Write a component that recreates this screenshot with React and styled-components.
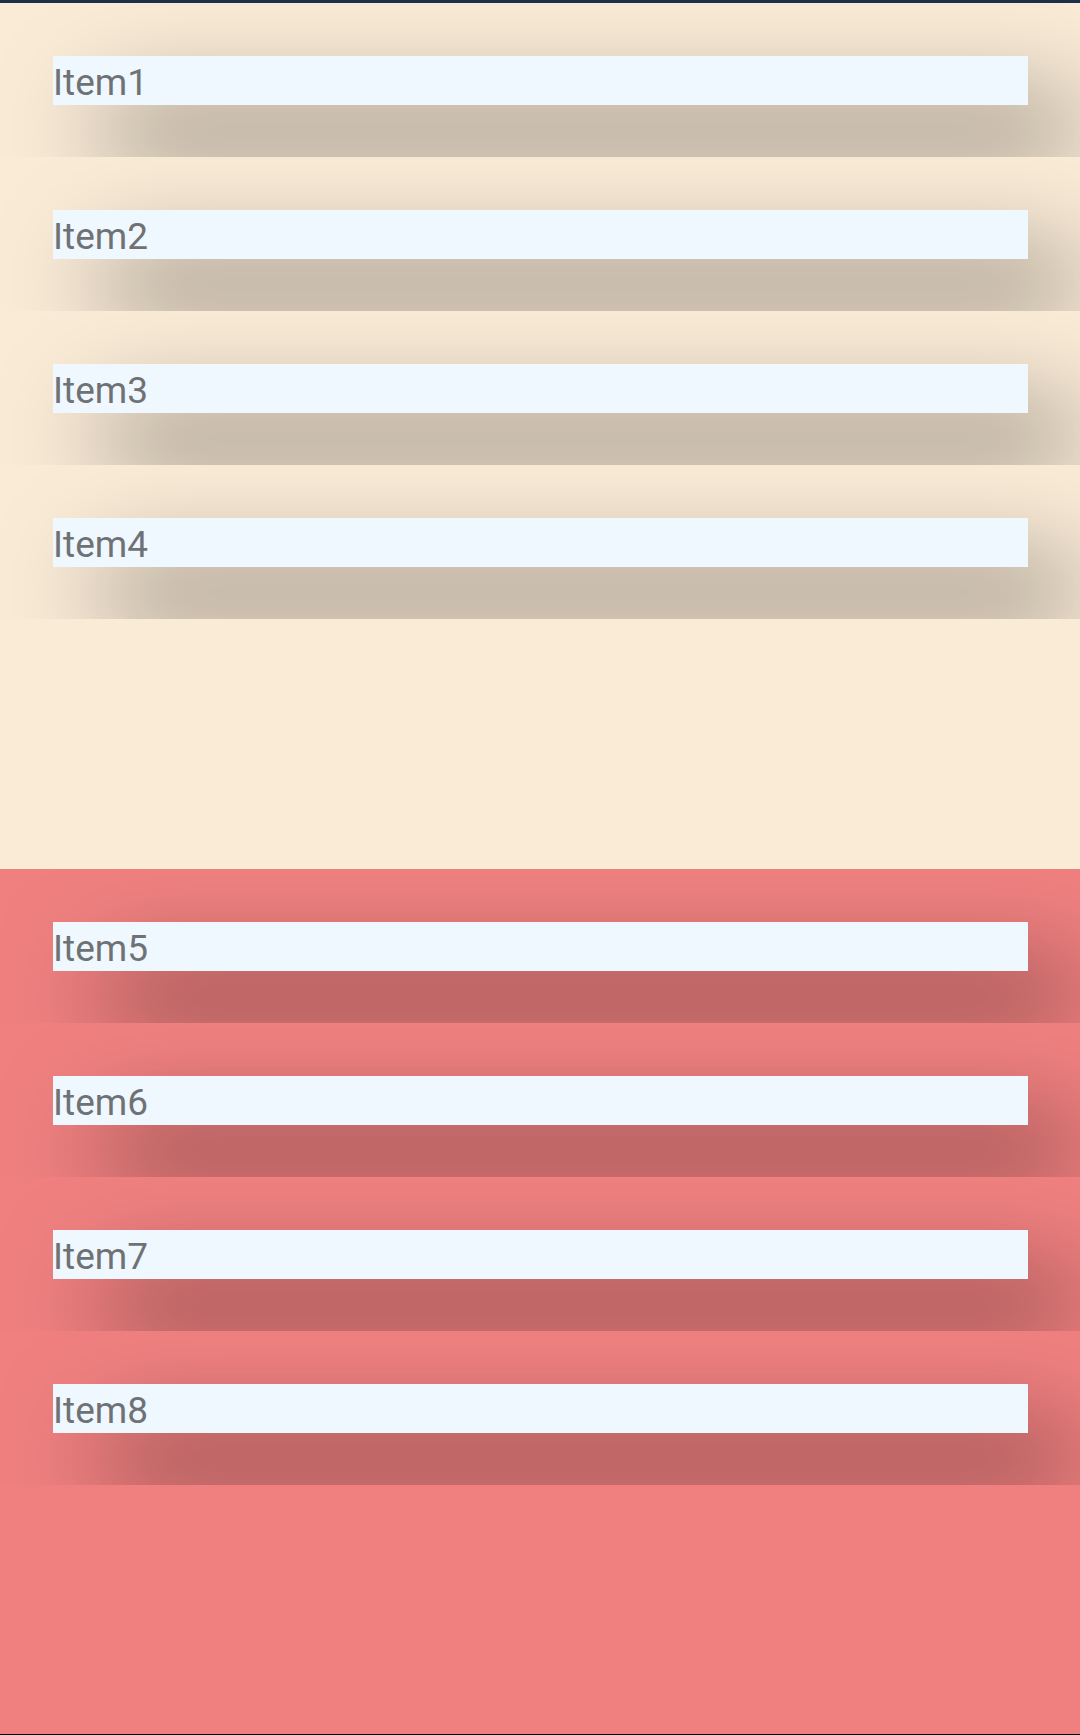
import React from "react";
import styled, { createGlobalStyle } from "styled-components";

const GlobalStyle = createGlobalStyle`
  html, body {
    margin: 0;
    padding: 0;
    background: #000;
  }
  body {
    font-family: Roboto, "Noto Sans", sans-serif;
  }
`;

const Page = styled.div`
  border-top: 3px solid #1d3049;
  display: flex;
  flex-direction: column;
`;

const Section = styled.section`
  background: ${(p) => p.$bg};
  height: ${(p) => p.$height}px;
  display: flex;
  flex-direction: column;
`;

const Row = styled.div`
  overflow: hidden;
  padding: 53px 52px 52px 53px;
`;

const Item = styled.div`
  background: aliceblue;
  height: 49px;
  line-height: 53px;
  font-size: 37px;
  color: #6f7275;
  box-shadow: 50px 50px 100px rgba(0, 0, 0, 0.52);
  white-space: nowrap;
  overflow: hidden;
`;

const sections = [
  { bg: "antiquewhite", height: 866, items: ["Item1", "Item2", "Item3", "Item4"] },
  { bg: "lightcoral", height: 865, items: ["Item5", "Item6", "Item7", "Item8"] },
];

export default function App() {
  return (
    <>
      <GlobalStyle />
      <Page>
        {sections.map((s, i) => (
          <Section key={i} $bg={s.bg} $height={s.height}>
            {s.items.map((it) => (
              <Row key={it}>
                <Item>{it}</Item>
              </Row>
            ))}
          </Section>
        ))}
      </Page>
    </>
  );
}
